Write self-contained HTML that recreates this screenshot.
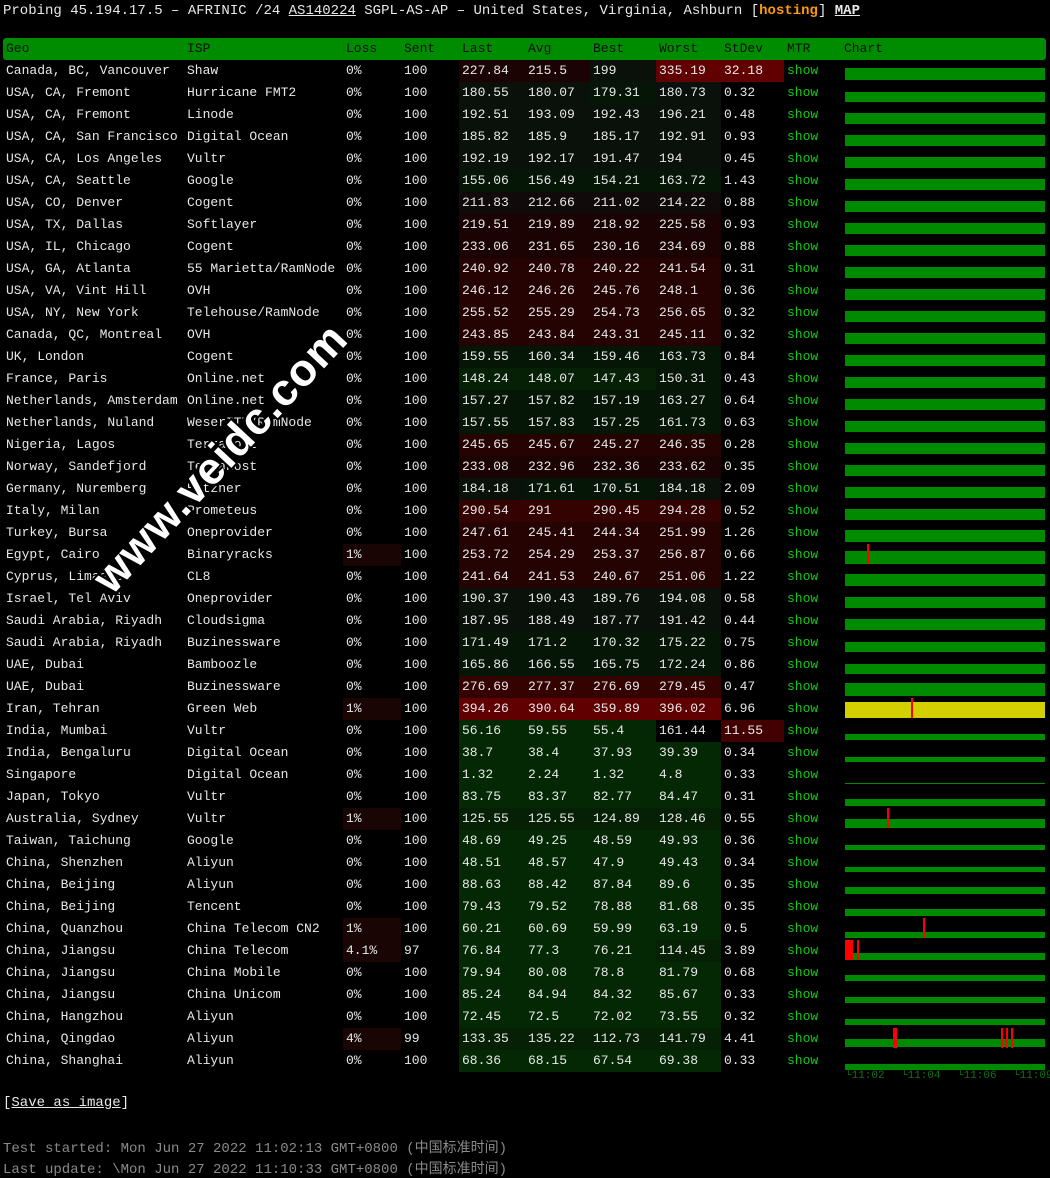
<!DOCTYPE html>
<html><head><meta charset="utf-8">
<style>
body{margin:0;background:#000;width:1050px;height:1177px;overflow:hidden;position:relative;font-family:"Liberation Mono","Noto Sans CJK SC",monospace;font-size:13px;color:#e8e8e8}
.hd{position:absolute;left:3px;top:3px;white-space:pre;font-size:14px}
.u{text-decoration:underline}
table{position:absolute;left:3px;top:38px;border-collapse:collapse;table-layout:fixed}
td{height:22px;padding:0 0 0 3px;white-space:pre;overflow:hidden;line-height:22px}
tr.h td{background:#008c00;color:#061206}
tr.h td:first-child{border-radius:3px 0 0 3px}
tr.h td:last-child{border-radius:0 3px 3px 0}
.m{color:#16c716}
.g4{background:#032803}.g3{background:#062006}.g2{background:#061606}.g1{background:#0a110a}.n{background:#100a0a}
.r1{background:#1c0303}.r2{background:#250303}.r3{background:#350202}.r4{background:#600000}.rs{background:#420000}.l{background:#1a0505}
.b{position:absolute;left:845px;width:200px;background:#008a00}
.y{background:#d4d000}
.rd{position:absolute;background:#ff0000;width:2px}
.t{position:absolute;top:1070px;font-size:11px;color:#127012}
.wm{position:absolute;left:45px;top:432px;width:350px;text-align:center;transform:rotate(-47deg);font:bold 45px "Liberation Sans",sans-serif;color:#fff;text-shadow:2px 2px 0 #000,-2px -2px 0 #000,2px -2px 0 #000,-2px 2px 0 #000;letter-spacing:1px}
.f{position:absolute;left:3px;white-space:pre;color:#8a8a8a;font-size:14px}
</style></head><body>
<div class="hd">Probing 45.194.17.5 – AFRINIC /24 <span class="u">AS140224</span> SGPL-AS-AP – United States, Virginia, Ashburn [<b style="color:#ff9a00">hosting</b>] <b class="u">MAP</b></div>
<table>
<colgroup><col style="width:181px"><col style="width:159px"><col style="width:58px"><col style="width:58px"><col style="width:66px"><col style="width:65px"><col style="width:66px"><col style="width:65px"><col style="width:63px"><col style="width:57px"><col style="width:205px"></colgroup>
<tr class="h"><td>Geo</td><td>ISP</td><td>Loss</td><td>Sent</td><td>Last</td><td>Avg</td><td>Best</td><td>Worst</td><td>StDev</td><td>MTR</td><td>Chart</td></tr>
<tr><td>Canada, BC, Vancouver</td><td>Shaw</td><td>0%</td><td>100</td><td class="r1">227.84</td><td class="r1">215.5</td><td class="g1">199</td><td class="r4">335.19</td><td class="r4">32.18</td><td class="m">show</td><td></td></tr>
<tr><td>USA, CA, Fremont</td><td>Hurricane FMT2</td><td>0%</td><td>100</td><td class="g1">180.55</td><td class="g1">180.07</td><td class="g2">179.31</td><td class="g1">180.73</td><td>0.32</td><td class="m">show</td><td></td></tr>
<tr><td>USA, CA, Fremont</td><td>Linode</td><td>0%</td><td>100</td><td class="g1">192.51</td><td class="g1">193.09</td><td class="g1">192.43</td><td class="g1">196.21</td><td>0.48</td><td class="m">show</td><td></td></tr>
<tr><td>USA, CA, San Francisco</td><td>Digital Ocean</td><td>0%</td><td>100</td><td class="g1">185.82</td><td class="g1">185.9</td><td class="g1">185.17</td><td class="g1">192.91</td><td>0.93</td><td class="m">show</td><td></td></tr>
<tr><td>USA, CA, Los Angeles</td><td>Vultr</td><td>0%</td><td>100</td><td class="g1">192.19</td><td class="g1">192.17</td><td class="g1">191.47</td><td class="g1">194</td><td>0.45</td><td class="m">show</td><td></td></tr>
<tr><td>USA, CA, Seattle</td><td>Google</td><td>0%</td><td>100</td><td class="g2">155.06</td><td class="g2">156.49</td><td class="g2">154.21</td><td class="g2">163.72</td><td>1.43</td><td class="m">show</td><td></td></tr>
<tr><td>USA, CO, Denver</td><td>Cogent</td><td>0%</td><td>100</td><td class="n">211.83</td><td class="n">212.66</td><td class="n">211.02</td><td class="n">214.22</td><td>0.88</td><td class="m">show</td><td></td></tr>
<tr><td>USA, TX, Dallas</td><td>Softlayer</td><td>0%</td><td>100</td><td class="r1">219.51</td><td class="r1">219.89</td><td class="r1">218.92</td><td class="r1">225.58</td><td>0.93</td><td class="m">show</td><td></td></tr>
<tr><td>USA, IL, Chicago</td><td>Cogent</td><td>0%</td><td>100</td><td class="r1">233.06</td><td class="r1">231.65</td><td class="r1">230.16</td><td class="r1">234.69</td><td>0.88</td><td class="m">show</td><td></td></tr>
<tr><td>USA, GA, Atlanta</td><td>55 Marietta/RamNode</td><td>0%</td><td>100</td><td class="r2">240.92</td><td class="r2">240.78</td><td class="r2">240.22</td><td class="r2">241.54</td><td>0.31</td><td class="m">show</td><td></td></tr>
<tr><td>USA, VA, Vint Hill</td><td>OVH</td><td>0%</td><td>100</td><td class="r2">246.12</td><td class="r2">246.26</td><td class="r2">245.76</td><td class="r2">248.1</td><td>0.36</td><td class="m">show</td><td></td></tr>
<tr><td>USA, NY, New York</td><td>Telehouse/RamNode</td><td>0%</td><td>100</td><td class="r2">255.52</td><td class="r2">255.29</td><td class="r2">254.73</td><td class="r2">256.65</td><td>0.32</td><td class="m">show</td><td></td></tr>
<tr><td>Canada, QC, Montreal</td><td>OVH</td><td>0%</td><td>100</td><td class="r2">243.85</td><td class="r2">243.84</td><td class="r2">243.31</td><td class="r2">245.11</td><td>0.32</td><td class="m">show</td><td></td></tr>
<tr><td>UK, London</td><td>Cogent</td><td>0%</td><td>100</td><td class="g2">159.55</td><td class="g2">160.34</td><td class="g2">159.46</td><td class="g2">163.73</td><td>0.84</td><td class="m">show</td><td></td></tr>
<tr><td>France, Paris</td><td>Online.net</td><td>0%</td><td>100</td><td class="g3">148.24</td><td class="g3">148.07</td><td class="g3">147.43</td><td class="g2">150.31</td><td>0.43</td><td class="m">show</td><td></td></tr>
<tr><td>Netherlands, Amsterdam</td><td>Online.net</td><td>0%</td><td>100</td><td class="g2">157.27</td><td class="g2">157.82</td><td class="g2">157.19</td><td class="g2">163.27</td><td>0.64</td><td class="m">show</td><td></td></tr>
<tr><td>Netherlands, Nuland</td><td>WeserITT/RamNode</td><td>0%</td><td>100</td><td class="g2">157.55</td><td class="g2">157.83</td><td class="g2">157.25</td><td class="g2">161.73</td><td>0.63</td><td class="m">show</td><td></td></tr>
<tr><td>Nigeria, Lagos</td><td>Terrahost</td><td>0%</td><td>100</td><td class="r2">245.65</td><td class="r2">245.67</td><td class="r2">245.27</td><td class="r2">246.35</td><td>0.28</td><td class="m">show</td><td></td></tr>
<tr><td>Norway, Sandefjord</td><td>Terrahost</td><td>0%</td><td>100</td><td class="r1">233.08</td><td class="r1">232.96</td><td class="r1">232.36</td><td class="r1">233.62</td><td>0.35</td><td class="m">show</td><td></td></tr>
<tr><td>Germany, Nuremberg</td><td>Hetzner</td><td>0%</td><td>100</td><td class="g1">184.18</td><td class="g2">171.61</td><td class="g2">170.51</td><td class="g1">184.18</td><td>2.09</td><td class="m">show</td><td></td></tr>
<tr><td>Italy, Milan</td><td>Prometeus</td><td>0%</td><td>100</td><td class="r3">290.54</td><td class="r3">291</td><td class="r3">290.45</td><td class="r3">294.28</td><td>0.52</td><td class="m">show</td><td></td></tr>
<tr><td>Turkey, Bursa</td><td>Oneprovider</td><td>0%</td><td>100</td><td class="r2">247.61</td><td class="r2">245.41</td><td class="r2">244.34</td><td class="r2">251.99</td><td>1.26</td><td class="m">show</td><td></td></tr>
<tr><td>Egypt, Cairo</td><td>Binaryracks</td><td class="l">1%</td><td>100</td><td class="r2">253.72</td><td class="r2">254.29</td><td class="r2">253.37</td><td class="r2">256.87</td><td>0.66</td><td class="m">show</td><td></td></tr>
<tr><td>Cyprus, Limassol</td><td>CL8</td><td>0%</td><td>100</td><td class="r2">241.64</td><td class="r2">241.53</td><td class="r2">240.67</td><td class="r2">251.06</td><td>1.22</td><td class="m">show</td><td></td></tr>
<tr><td>Israel, Tel Aviv</td><td>Oneprovider</td><td>0%</td><td>100</td><td class="g1">190.37</td><td class="g1">190.43</td><td class="g1">189.76</td><td class="g1">194.08</td><td>0.58</td><td class="m">show</td><td></td></tr>
<tr><td>Saudi Arabia, Riyadh</td><td>Cloudsigma</td><td>0%</td><td>100</td><td class="g1">187.95</td><td class="g1">188.49</td><td class="g1">187.77</td><td class="g1">191.42</td><td>0.44</td><td class="m">show</td><td></td></tr>
<tr><td>Saudi Arabia, Riyadh</td><td>Buzinessware</td><td>0%</td><td>100</td><td class="g2">171.49</td><td class="g2">171.2</td><td class="g2">170.32</td><td class="g2">175.22</td><td>0.75</td><td class="m">show</td><td></td></tr>
<tr><td>UAE, Dubai</td><td>Bamboozle</td><td>0%</td><td>100</td><td class="g2">165.86</td><td class="g2">166.55</td><td class="g2">165.75</td><td class="g2">172.24</td><td>0.86</td><td class="m">show</td><td></td></tr>
<tr><td>UAE, Dubai</td><td>Buzinessware</td><td>0%</td><td>100</td><td class="r3">276.69</td><td class="r3">277.37</td><td class="r3">276.69</td><td class="r3">279.45</td><td>0.47</td><td class="m">show</td><td></td></tr>
<tr><td>Iran, Tehran</td><td>Green Web</td><td class="l">1%</td><td>100</td><td class="r4">394.26</td><td class="r4">390.64</td><td class="r4">359.89</td><td class="r4">396.02</td><td>6.96</td><td class="m">show</td><td></td></tr>
<tr><td>India, Mumbai</td><td>Vultr</td><td>0%</td><td>100</td><td class="g4">56.16</td><td class="g4">59.55</td><td class="g4">55.4</td><td>161.44</td><td class="rs">11.55</td><td class="m">show</td><td></td></tr>
<tr><td>India, Bengaluru</td><td>Digital Ocean</td><td>0%</td><td>100</td><td class="g4">38.7</td><td class="g4">38.4</td><td class="g4">37.93</td><td class="g4">39.39</td><td>0.34</td><td class="m">show</td><td></td></tr>
<tr><td>Singapore</td><td>Digital Ocean</td><td>0%</td><td>100</td><td class="g4">1.32</td><td class="g4">2.24</td><td class="g4">1.32</td><td class="g4">4.8</td><td>0.33</td><td class="m">show</td><td></td></tr>
<tr><td>Japan, Tokyo</td><td>Vultr</td><td>0%</td><td>100</td><td class="g4">83.75</td><td class="g4">83.37</td><td class="g4">82.77</td><td class="g4">84.47</td><td>0.31</td><td class="m">show</td><td></td></tr>
<tr><td>Australia, Sydney</td><td>Vultr</td><td class="l">1%</td><td>100</td><td class="g3">125.55</td><td class="g3">125.55</td><td class="g3">124.89</td><td class="g3">128.46</td><td>0.55</td><td class="m">show</td><td></td></tr>
<tr><td>Taiwan, Taichung</td><td>Google</td><td>0%</td><td>100</td><td class="g4">48.69</td><td class="g4">49.25</td><td class="g4">48.59</td><td class="g4">49.93</td><td>0.36</td><td class="m">show</td><td></td></tr>
<tr><td>China, Shenzhen</td><td>Aliyun</td><td>0%</td><td>100</td><td class="g4">48.51</td><td class="g4">48.57</td><td class="g4">47.9</td><td class="g4">49.43</td><td>0.34</td><td class="m">show</td><td></td></tr>
<tr><td>China, Beijing</td><td>Aliyun</td><td>0%</td><td>100</td><td class="g4">88.63</td><td class="g4">88.42</td><td class="g4">87.84</td><td class="g4">89.6</td><td>0.35</td><td class="m">show</td><td></td></tr>
<tr><td>China, Beijing</td><td>Tencent</td><td>0%</td><td>100</td><td class="g4">79.43</td><td class="g4">79.52</td><td class="g4">78.88</td><td class="g4">81.68</td><td>0.35</td><td class="m">show</td><td></td></tr>
<tr><td>China, Quanzhou</td><td>China Telecom CN2</td><td class="l">1%</td><td>100</td><td class="g4">60.21</td><td class="g4">60.69</td><td class="g4">59.99</td><td class="g4">63.19</td><td>0.5</td><td class="m">show</td><td></td></tr>
<tr><td>China, Jiangsu</td><td>China Telecom</td><td class="l">4.1%</td><td>97</td><td class="g4">76.84</td><td class="g4">77.3</td><td class="g4">76.21</td><td class="g3">114.45</td><td>3.89</td><td class="m">show</td><td></td></tr>
<tr><td>China, Jiangsu</td><td>China Mobile</td><td>0%</td><td>100</td><td class="g4">79.94</td><td class="g4">80.08</td><td class="g4">78.8</td><td class="g4">81.79</td><td>0.68</td><td class="m">show</td><td></td></tr>
<tr><td>China, Jiangsu</td><td>China Unicom</td><td>0%</td><td>100</td><td class="g4">85.24</td><td class="g4">84.94</td><td class="g4">84.32</td><td class="g4">85.67</td><td>0.33</td><td class="m">show</td><td></td></tr>
<tr><td>China, Hangzhou</td><td>Aliyun</td><td>0%</td><td>100</td><td class="g4">72.45</td><td class="g4">72.5</td><td class="g4">72.02</td><td class="g4">73.55</td><td>0.32</td><td class="m">show</td><td></td></tr>
<tr><td>China, Qingdao</td><td>Aliyun</td><td class="l">4%</td><td>99</td><td class="g3">133.35</td><td class="g3">135.22</td><td class="g3">112.73</td><td class="g3">141.79</td><td>4.41</td><td class="m">show</td><td></td></tr>
<tr><td>China, Shanghai</td><td>Aliyun</td><td>0%</td><td>100</td><td class="g4">68.36</td><td class="g4">68.15</td><td class="g4">67.54</td><td class="g4">69.38</td><td>0.33</td><td class="m">show</td><td></td></tr>
</table>

<div class="b" style="top:68px;height:12px"></div>
<div class="b" style="top:92px;height:10px"></div>
<div class="b" style="top:113px;height:11px"></div>
<div class="b" style="top:135px;height:11px"></div>
<div class="b" style="top:157px;height:11px"></div>
<div class="b" style="top:179px;height:11px"></div>
<div class="b" style="top:201px;height:11px"></div>
<div class="b" style="top:223px;height:11px"></div>
<div class="b" style="top:245px;height:11px"></div>
<div class="b" style="top:267px;height:11px"></div>
<div class="b" style="top:289px;height:11px"></div>
<div class="b" style="top:311px;height:11px"></div>
<div class="b" style="top:333px;height:11px"></div>
<div class="b" style="top:355px;height:11px"></div>
<div class="b" style="top:377px;height:11px"></div>
<div class="b" style="top:399px;height:11px"></div>
<div class="b" style="top:421px;height:11px"></div>
<div class="b" style="top:443px;height:11px"></div>
<div class="b" style="top:465px;height:11px"></div>
<div class="b" style="top:487px;height:11px"></div>
<div class="b" style="top:509px;height:11px"></div>
<div class="b" style="top:530px;height:12px"></div>
<div class="b" style="top:551px;height:13px"></div>
<div class="b" style="top:574px;height:12px"></div>
<div class="b" style="top:597px;height:11px"></div>
<div class="b" style="top:619px;height:11px"></div>
<div class="b" style="top:642px;height:10px"></div>
<div class="b" style="top:664px;height:10px"></div>
<div class="b" style="top:683px;height:13px"></div>
<div class="b y" style="top:702px;height:16px"></div>
<div class="b" style="top:734px;height:6px"></div>
<div class="b" style="top:757px;height:5px"></div>
<div class="b" style="top:783px;height:1px"></div>
<div class="b" style="top:799px;height:7px"></div>
<div class="b" style="top:819px;height:9px"></div>
<div class="b" style="top:845px;height:5px"></div>
<div class="b" style="top:867px;height:5px"></div>
<div class="b" style="top:887px;height:7px"></div>
<div class="b" style="top:909px;height:7px"></div>
<div class="b" style="top:932px;height:6px"></div>
<div class="b" style="top:953px;height:7px"></div>
<div class="b" style="top:975px;height:6px"></div>
<div class="b" style="top:997px;height:6px"></div>
<div class="b" style="top:1019px;height:6px"></div>
<div class="b" style="top:1039px;height:8px"></div>
<div class="b" style="top:1064px;height:6px"></div>

<div class="rd" style="left:867px;top:544px;height:20px"></div>
<div class="rd" style="left:911px;top:698px;height:20px"></div>
<div class="rd" style="left:887px;top:808px;height:20px"></div>
<div class="rd" style="left:923px;top:918px;height:20px"></div>
<div class="rd" style="left:845px;top:940px;height:20px;width:8px"></div>
<div class="rd" style="left:857px;top:940px;height:20px"></div>
<div class="rd" style="left:893px;top:1028px;height:20px;width:4px"></div>
<div class="rd" style="left:1001px;top:1028px;height:20px"></div>
<div class="rd" style="left:1006px;top:1028px;height:20px"></div>
<div class="rd" style="left:1011px;top:1028px;height:20px"></div>

<div class="t" style="left:845px">└11:02</div>
<div class="t" style="left:901px">└11:04</div>
<div class="t" style="left:957px">└11:06</div>
<div class="t" style="left:1013px">└11:09</div>

<div class="wm">www.veidc.com</div>

<div class="f" style="top:1095px;color:#e8e8e8">[<span class="u">Save as image</span>]</div>
<div class="f" style="top:1137px">Test started: Mon Jun 27 2022 11:02:13 GMT+0800 (中国标准时间)</div>
<div class="f" style="top:1158px">Last update: \Mon Jun 27 2022 11:10:33 GMT+0800 (中国标准时间)</div>
</body></html>
